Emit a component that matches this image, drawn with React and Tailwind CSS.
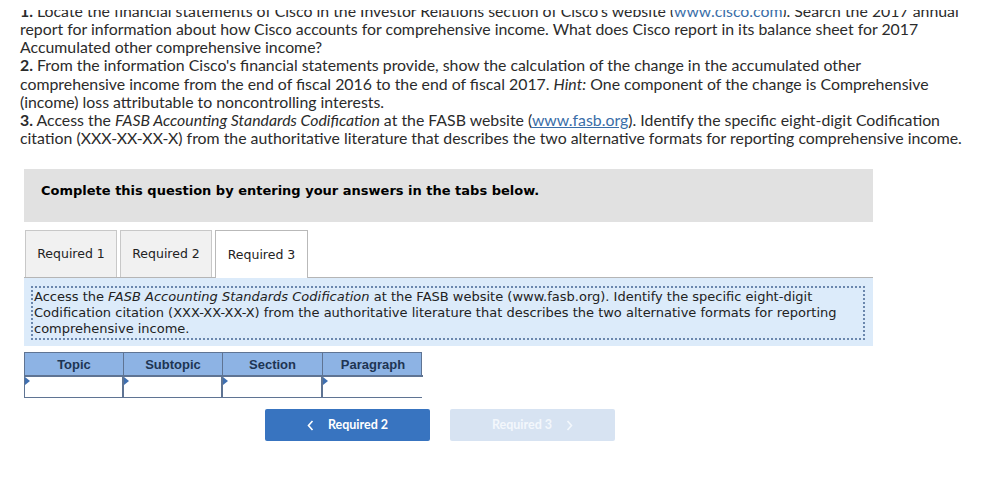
import React from "react";

const Tri = () => (
  <svg className="absolute left-0 top-0" width="5" height="8" viewBox="0 0 5 8">
    <polygon points="0,0 5,4 0,8" fill="#3f6fb0" />
  </svg>
);

export default function App() {
  return (
    <div className="w-[994px] h-[484px] bg-white overflow-hidden">
      <div
        className="pl-[20px] text-[15.85px] leading-[18.2px] text-[#2b2b2b] whitespace-nowrap"
        style={{ fontFamily: "Lato, 'Open Sans', sans-serif" }}
      >
        <div className="pt-[10px]">
          <div className="h-[7px] overflow-hidden">
            <div className="mt-[-8px]">
              <b>1.</b> Locate the financial statements of Cisco in the Investor Relations section of Cisco's website (
              <span className="text-[#3a6ea8] underline">www.cisco.com</span>). Search the 2017 annual
            </div>
          </div>
        </div>
        <div className="mt-[3px]">
          <div>report for information about how Cisco accounts for comprehensive income. What does Cisco report in its balance sheet for 2017</div>
          <div>Accumulated other comprehensive income?</div>
          <div>
            <b>2.</b> From the information Cisco's financial statements provide, show the calculation of the change in the accumulated other
          </div>
          <div>
            comprehensive income from the end of fiscal 2016 to the end of fiscal 2017. <i>Hint:</i> One component of the change is Comprehensive
          </div>
          <div>(income) loss attributable to noncontrolling interests.</div>
          <div>
            <b>3.</b> Access the <i>FASB Accounting Standards Codification</i> at the FASB website (
            <span className="text-[#3a6ea8] underline">www.fasb.org</span>). Identify the specific eight-digit Codification
          </div>
          <div>citation (XXX-XX-XX-X) from the authoritative literature that describes the two alternative formats for reporting comprehensive income.</div>
        </div>
      </div>

      <div
        className="ml-[24px] w-[849px]"
        style={{ fontFamily: "Verdana, 'DejaVu Sans', sans-serif" }}
      >
        <div className="mt-[22px] h-[53px] bg-[#e1e1e1] pt-[14px] pl-[17px] text-[13px] leading-[16px] font-bold text-black">
          Complete this question by entering your answers in the tabs below.
        </div>

        <div className="mt-[8px] flex gap-[3px] pl-[1px] text-[12.5px] text-[#222]">
          <div className="w-[92px] h-[47px] flex items-center justify-center bg-[#f1f1f1] border border-[#c8c8c8] border-b-0">Required 1</div>
          <div className="w-[92px] h-[47px] flex items-center justify-center bg-[#f1f1f1] border border-[#c8c8c8] border-b-0">Required 2</div>
          <div className="w-[93px] h-[48px] flex items-center justify-center bg-white border border-[#b9b9b9] border-b-0 mb-[-1px] relative z-10">Required 3</div>
        </div>

        <div className="border-t border-[#b5b5b5] bg-[#dcebfa] pt-[8px] pb-[6px] pl-[7px] pr-[8px]">
          <div className="border-2 border-dotted border-[#6b87ad] text-[13px] leading-[16px] text-[#222] pl-[1px] py-[1px] whitespace-nowrap">
            Access the <i>FASB Accounting Standards Codification</i> at the FASB website (www.fasb.org). Identify the specific eight-digit
            <br />
            Codification citation (XXX-XX-XX-X) from the authoritative literature that describes the two alternative formats for reporting
            <br />
            comprehensive income.
          </div>
        </div>

        <div className="mt-[6px]" style={{ fontFamily: "Arial, 'Liberation Sans', sans-serif" }}>
          <div className="grid grid-cols-[99px_99px_100px_100px] w-[398px] border border-[#5f7493] bg-[#8db3e4]">
            {["Topic", "Subtopic", "Section", "Paragraph"].map((h, i) => (
              <div
                key={h}
                className={`h-[22px] flex items-center justify-center text-[13px] font-bold text-[#1e3553] ${i < 3 ? "border-r border-[#5f7493]" : ""}`}
              >
                {h}
              </div>
            ))}
            {[0, 1, 2, 3].map((i) => (
              <div
                key={i}
                className={`relative h-[22px] bg-white border-t-2 border-[#5f7493] ${i < 3 ? "border-r-2" : ""}`}
              >
                <Tri />
              </div>
            ))}
          </div>
        </div>

        <div
          className="mt-[11px] ml-[241px] flex gap-[20px] text-[12.5px] font-bold"
          style={{ fontFamily: "Lato, 'Open Sans', sans-serif" }}
        >
          <div className="w-[165px] h-[32px] rounded-[2px] bg-[#3874c0] text-white flex items-center justify-center gap-[14px]">
            <svg width="7" height="11" viewBox="0 0 7 11"><path d="M5.5 1 L1.5 5.5 L5.5 10" stroke="white" strokeWidth="1.6" fill="none" /></svg>
            <span>Required 2</span>
          </div>
          <div className="w-[165px] h-[32px] rounded-[2px] bg-[#d7e3f2] text-[#f3f7fc] flex items-center justify-center gap-[14px]">
            <span>Required 3</span>
            <svg width="7" height="11" viewBox="0 0 7 11"><path d="M1.5 1 L5.5 5.5 L1.5 10" stroke="#f3f7fc" strokeWidth="1.6" fill="none" /></svg>
          </div>
        </div>
      </div>
    </div>
  );
}
